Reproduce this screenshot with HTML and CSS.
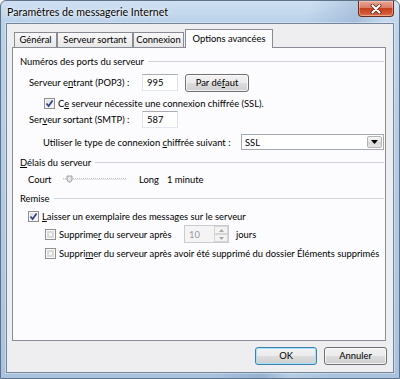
FILE: index.html
```html
<!DOCTYPE html>
<html lang="fr">
<head>
<meta charset="utf-8">
<title>Paramètres de messagerie Internet</title>
<link rel="stylesheet" href="styles.css">
</head>
<body>
<div class="window">
  <div class="titlebar">
    <div class="title">Paramètres de messagerie Internet</div>
    <div class="close">
      <svg width="14" height="10" viewBox="0 0 14 10"><path d="M3.5 1.5 L10.5 8.5 M10.5 1.5 L3.5 8.5" stroke="#5a2418" stroke-width="3.8" stroke-linecap="round"/><path d="M3.5 1.5 L10.5 8.5 M10.5 1.5 L3.5 8.5" stroke="#fff" stroke-width="2.2" stroke-linecap="round"/></svg>
    </div>
  </div>
  <div class="client">
    <div class="tabs">
      <div class="tab w-gen">Général</div>
      <div class="tab w-srv">Serveur sortant</div>
      <div class="tab w-con">Connexion</div>
      <div class="tab active">Options avancées</div>
    </div>
    <div class="panel">
      <div class="gh g1"><span>Numéros des ports du serveur</span></div>
      <div class="row r-pop">
        <span class="lbl">Serveur e<u>n</u>trant (POP3) :</span>
        <div class="textbox">995</div>
        <div class="btn btn-par">Par dé<u>f</u>aut</div>
      </div>
      <div class="row r-ssl">
        <span class="chk"><svg width="9" height="9" viewBox="0 0 9 9"><path d="M1.5 4.5 L3.6 7 L7.6 1.5" fill="none" stroke="#33418a" stroke-width="1.7"/></svg></span>
        <span>C<u>e</u> serveur nécessite une connexion chiffrée (SSL).</span>
      </div>
      <div class="row r-smtp">
        <span class="lbl">Ser<u>v</u>eur sortant (SMTP) :</span>
        <div class="textbox">587</div>
      </div>
      <div class="row r-use">
        <span class="lbl-use">Utiliser le type de connexion <u>c</u>hiffrée suivant :</span>
        <div class="select">
          <span class="sel-val">SSL</span>
          <span class="sel-btn"><svg width="7" height="4" viewBox="0 0 7 4"><path d="M0 0 H7 L3.5 4 Z" fill="#000"/></svg></span>
        </div>
      </div>
      <div class="gh g2"><span><u>D</u>élais du serveur</span></div>
      <div class="row r-court">
        <span class="lbl-court">Court</span>
        <span class="slider"><svg width="64" height="8" viewBox="0 0 64 8"><line x1="0" y1="3.5" x2="64" y2="3.5" stroke="#c4c4c4" stroke-width="1" stroke-dasharray="1 1"/><line x1="0" y1="4.5" x2="64" y2="4.5" stroke="#e8e8e8" stroke-width="1"/><path d="M4 1 H9 V5 L7.5 7 H5.5 L4 5 Z" fill="#e6e6e6" stroke="#8a8a8a" stroke-width="0.8"/></svg></span>
        <span class="lbl-long">Long</span>
        <span>1 minute</span>
      </div>
      <div class="gh g3"><span>Remise</span></div>
      <div class="row r-laisser">
        <span class="chk"><svg width="9" height="9" viewBox="0 0 9 9"><path d="M1.5 4.5 L3.6 7 L7.6 1.5" fill="none" stroke="#33418a" stroke-width="1.7"/></svg></span>
        <span><u>L</u>aisser un exemplaire des messages sur le serveur</span>
      </div>
      <div class="row r-sup1">
        <span class="chk off"></span>
        <span class="lbl-sup">Supprime<u>r</u> du serveur après</span>
        <div class="spin">
          <span class="spin-val">10</span>
          <span class="spin-btns">
            <span class="sb"><svg width="5" height="3" viewBox="0 0 5 3"><path d="M0 3 H5 L2.5 0 Z" fill="#a8a8a8"/></svg></span>
            <span class="sb"><svg width="5" height="3" viewBox="0 0 5 3"><path d="M0 0 H5 L2.5 3 Z" fill="#a8a8a8"/></svg></span>
          </span>
        </div>
        <span class="lbl-jours">jours</span>
      </div>
      <div class="row r-sup2">
        <span class="chk off"></span>
        <span>Suppri<u>m</u>er du serveur après avoir été supprimé du dossier Éléments supprimés</span>
      </div>
    </div>
    <div class="actions">
      <div class="btn btn-ok">OK</div>
      <div class="btn btn-cancel">Annuler</div>
    </div>
  </div>
</div>
</body>
</html>
```

FILE: styles.css
```css
* { box-sizing: border-box; }
html, body { margin: 0; padding: 0; }
body {
  width: 400px;
  height: 379px;
  overflow: hidden;
  background: #ffffff;
  font-family: "Lato", "Liberation Sans", sans-serif;
  font-size: 9.4px;
  color: #000;
}
u { text-decoration: underline; text-underline-offset: 1px; }

.window {
  width: 400px;
  height: 379px;
  border: 1px solid #5f7289;
  border-radius: 6px 6px 0 0;
  background:
    linear-gradient(105deg, rgba(255,255,255,0) 62%, rgba(80,115,160,0.22) 72%, rgba(255,255,255,0.15) 78%, rgba(255,255,255,0) 86%),
    linear-gradient(180deg, #cfe0f2 0px, #bad1ea 22px, #a9c3df 100%);
  display: flex;
  flex-direction: column;
}

.titlebar {
  height: 22px;
  display: flex;
  justify-content: space-between;
  align-items: flex-start;
  padding-left: 6px;
}
.title {
  margin-top: 4px;
  font-size: 10.6px;
  line-height: 14px;
  color: #000;
  text-shadow: 0 0 5px rgba(255,255,255,0.9), 0 0 2px rgba(255,255,255,0.9);
}
.close {
  width: 36px;
  height: 16px;
  margin-right: 5px;
  border: 1px solid #6a2b20;
  border-top: none;
  border-radius: 0 0 4px 4px;
  background: linear-gradient(180deg, #e9a898 0%, #dc7b66 45%, #c5401f 50%, #d35a38 85%, #e07a55 100%);
  box-shadow: inset 0 0 0 1px rgba(255,220,200,0.45);
  display: flex;
  align-items: center;
  justify-content: center;
}

.client {
  margin: 0 5px 5px 5px;
  height: 350px;
  border: 1px solid #75869a;
  box-shadow: 0 0 0 1px rgba(255,255,255,0.35);
  background: #eeeef1;
  padding: 5px 6px 0 5px;
  display: flex;
  flex-direction: column;
}

.tabs {
  height: 19px;
  margin-bottom: -1px;
  display: flex;
  align-items: flex-end;
  padding-left: 2px;
}
.tab {
  height: 16px;
  border: 1px solid #898c95;
  border-bottom: none;
  background: linear-gradient(180deg, #f8f8f8, #e6e6e6);
  text-align: center;
  line-height: 14px;
  white-space: nowrap;
}
.tab + .tab { border-left: none; }
.w-gen { width: 43px; }
.w-srv { width: 76px; border-left: 1px solid #898c95 !important; }
.w-con { width: 51px; border-left: 1px solid #898c95 !important; }
.tab.active {
  position: relative;
  z-index: 1;
  width: 88px;
  height: 19px;
  margin-left: 1px;
  border-left: 1px solid #898c95;
  background: #fcfcfe;
  padding-top: 2px;
}

.panel {
  width: 374px;
  height: 294px;
  border: 1px solid #898c95;
  background: #fcfcfe;
  padding: 0 1px 0 7px;
  display: flex;
  flex-direction: column;
}

.gh {
  height: 14px;
  display: flex;
  align-items: center;
  white-space: nowrap;
}
.gh::after {
  content: "";
  flex: 1;
  height: 1px;
  margin-left: 4px;
  background: #cfd2d8;
}
.g1 { margin-top: 6px; }
.g2 { margin-top: 5px; }
.g3 { margin-top: 5px; }

.row {
  display: flex;
  align-items: center;
  white-space: nowrap;
}
.r-pop { margin-top: 6px; height: 18px; padding-left: 9px; align-items: flex-start; }
.r-pop .lbl { line-height: 17px; }
.r-ssl { margin-top: 5px; height: 13px; padding-left: 24px; }
.r-smtp { margin-top: 1px; height: 17px; padding-left: 9px; }
.r-use { margin-top: 6px; height: 16px; padding-left: 23px; }
.r-court { margin-top: 3px; height: 14px; padding-left: 8px; }
.r-laisser { margin-top: 4px; height: 14px; padding-left: 8px; }
.r-sup1 { margin-top: 2px; height: 18px; padding-left: 25px; }
.r-sup2 { margin-top: 3px; height: 14px; padding-left: 25px; }

.lbl { width: 113px; }
.lbl-use { width: 198px; }
.lbl-court { width: 35px; }
.lbl-long { width: 28px; margin-left: 12px; }
.lbl-sup { width: 125px; }
.lbl-jours { margin-left: 7px; }

.textbox {
  width: 36px;
  height: 17px;
  border: 1px solid;
  border-color: #abadb3 #dbdfe6 #e3e9ef #e2e3ea;
  background: #fff;
  padding-left: 4px;
  line-height: 15px;
}

.btn {
  height: 18px;
  border: 1px solid #707070;
  border-radius: 3px;
  background: linear-gradient(180deg, #f2f2f2 0%, #ebebeb 50%, #dddddd 51%, #cfcfcf 100%);
  box-shadow: inset 0 0 0 1px rgba(255,255,255,0.75);
  display: flex;
  align-items: center;
  justify-content: center;
  line-height: 14px;
}
.btn-par { width: 64px; margin-left: 7px; }

.chk {
  width: 11px;
  height: 11px;
  margin-right: 3px;
  border: 1px solid #8e8f8f;
  background: linear-gradient(135deg, #dcdcdc, #fbfbfb);
  box-shadow: inset 0 0 0 1px #f4f4f4;
  display: flex;
  align-items: center;
  justify-content: center;
  flex: none;
}
.chk.off {
  background: #f6f6f6;
  box-shadow: inset 0 0 0 1px #fdfdfd, inset 0 0 0 3px #dadada;
}

.select {
  width: 143px;
  height: 16px;
  border: 1px solid #a5a9b1;
  background: #fff;
  display: flex;
  align-items: center;
  justify-content: space-between;
  padding: 0 1px 0 3px;
}
.sel-btn {
  width: 15px;
  height: 12px;
  border: 1px solid #b4b4b4;
  border-radius: 2px;
  background: linear-gradient(180deg, #f7f7f7, #e3e3e3 50%, #d6d6d6 51%, #e6e6e6);
  display: flex;
  align-items: center;
  justify-content: center;
}

.slider { width: 64px; height: 8px; display: flex; }

.spin {
  width: 45px;
  height: 18px;
  border: 1px solid #c9cbd0;
  background: #f4f4f5;
  display: flex;
  align-items: center;
  justify-content: space-between;
  padding-left: 4px;
}
.spin-val { color: #9a9a9a; }
.spin-btns {
  width: 14px;
  height: 16px;
  display: flex;
  flex-direction: column;
}
.sb {
  flex: 1;
  border: 1px solid #d6d6d6;
  background: #f3f3f3;
  display: flex;
  align-items: center;
  justify-content: center;
}

.actions {
  margin-top: 6px;
  display: flex;
  justify-content: flex-end;
  gap: 7px;
  padding-right: 0;
}
.btn-ok {
  width: 62px;
  border-color: #3c7fb1;
  box-shadow: inset 0 0 0 1px #a8e2fa;
}
.btn-cancel { width: 63px; }
```
